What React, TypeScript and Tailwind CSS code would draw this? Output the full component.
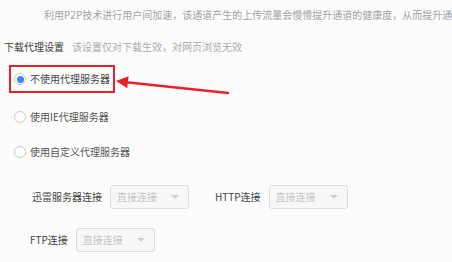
import React from "react";

function Radio({ checked }: { checked?: boolean }) {
  return (
    <span className="flex h-[12px] w-[12px] shrink-0 items-center justify-center rounded-full border border-[#c8c8c8] bg-white">
      {checked ? <span className="h-[7px] w-[7px] rounded-full bg-[#3d86f2]" /> : null}
    </span>
  );
}

function FakeSelect() {
  return (
    <div className="flex h-[24px] w-[79px] shrink-0 items-center justify-between rounded-[3px] border border-[#dedede] bg-[#f7f7f7] pl-[6px] pr-[9px] text-[#c6c6c6]">
      <span>直接连接</span>
      <span className="h-0 w-0 border-l-[4px] border-r-[4px] border-t-[4px] border-l-transparent border-r-transparent border-t-[#d0d0d0]" />
    </div>
  );
}

export default function App() {
  return (
    <div className="relative h-[262px] w-[452px] overflow-hidden bg-[#fcfcfc] font-['Noto_Sans_CJK_SC','Noto_Sans',sans-serif] text-[10px] leading-[12px]">
      <div className="overflow-hidden whitespace-nowrap pl-[44px] pt-[9px] text-[#a3a3a3]">
        利用P2P技术进行用户间加速，该通道产生的上传流量会慢慢提升通道的健康度，从而提升通
      </div>

      <div className="mt-[20px] flex gap-[8px] whitespace-nowrap pl-[4px]">
        <span className="text-[#3a3a3a]">下载代理设置</span>
        <span className="text-[#ababab]">该设置仅对下载生效，对网页浏览无效</span>
      </div>

      <div className="ml-[9px] mt-[12px] flex h-[28px] w-[106px] items-center gap-[4px] border-2 border-[#e5222b] pl-[3px] text-[#444]">
        <Radio checked />
        <span className="whitespace-nowrap">不使用代理服务器</span>
      </div>

      <div className="ml-[14px] mt-[10px] flex h-[28px] items-center gap-[4px] text-[#555]">
        <Radio />
        <span className="whitespace-nowrap">使用IE代理服务器</span>
      </div>

      <div className="ml-[14px] mt-[7px] flex h-[28px] items-center gap-[4px] text-[#555]">
        <Radio />
        <span className="whitespace-nowrap">使用自定义代理服务器</span>
      </div>

      <div className="mt-[19px] flex items-center pl-[32px] text-[#444]">
        <span className="whitespace-nowrap">迅雷服务器连接</span>
        <span className="ml-[8px]">
          <FakeSelect />
        </span>
        <span className="ml-[26px] whitespace-nowrap">HTTP连接</span>
        <span className="ml-[8px]">
          <FakeSelect />
        </span>
      </div>

      <div className="mt-[19px] flex items-center pl-[30px] text-[#444]">
        <span className="whitespace-nowrap">FTP连接</span>
        <span className="ml-[8px]">
          <FakeSelect />
        </span>
      </div>

      <svg className="pointer-events-none absolute left-0 top-0" width="452" height="262" viewBox="0 0 452 262">
        <line x1="228" y1="93" x2="126" y2="82.2" stroke="#e5222b" strokeWidth="2.4" strokeLinecap="round" />
        <polygon points="116,81 128.6,76.3 127.3,88.2" fill="#e5222b" />
      </svg>
    </div>
  );
}
